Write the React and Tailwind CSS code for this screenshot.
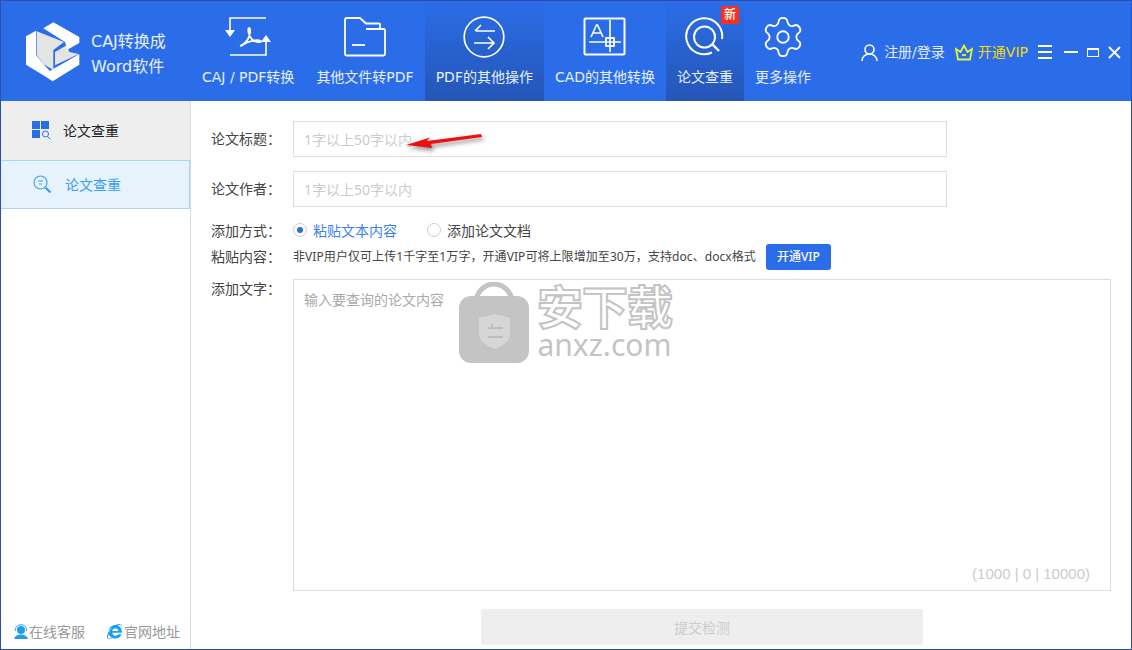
import { Settings } from "lucide-react";
import { FaInternetExplorer } from "react-icons/fa";

const navItems = [
  { label: "CAJ / PDF转换", icon: <ConvertIcon /> },
  { label: "其他文件转PDF", icon: <FolderIcon /> },
  { label: "PDF的其他操作", icon: <SwapIcon />, active: true },
  { label: "CAD的其他转换", icon: <CadIcon /> },
  { label: "论文查重", icon: <CheckIcon />, active: true, badge: true },
  { label: "更多操作", icon: <Settings size={46} color="white" strokeWidth={0.95} /> },
];

function ConvertIcon() {
  return (
    <svg width="48" height="40" viewBox="0 0 48 40" fill="none" stroke="white" strokeWidth="1.6">
      <path d="M42 1H6v13" />
      <path d="M1 13h10l-5 7z" fill="white" stroke="none" />
      <path d="M6 38h36V24" />
      <path d="M37 25h10l-5-7z" fill="white" stroke="none" />
      <path d="M16 29c5-2 9-7 10-13 .4-3-.1-5-1-5s-1 3 0 6c1 4 4 7 9 8 2 .4 3 0 3-.6 0-1-3-1.400-6-1-5 .6-10 2.600-14 5.600" strokeWidth="1.800" />
    </svg>
  );
}

function FolderIcon() {
  return (
    <svg width="42" height="40" viewBox="0 0 42 40" fill="none" stroke="white" strokeWidth="1.8">
      <path d="M1 3q0-2 2-2h13l6 5.500h13q1 0 1 1V12" />
      <path d="M1 3v34q0 1.500 1.500 1.500h37q1.500 0 1.500-1.500V13.500q0-1.500-1.500-1.500H22" />
      <path d="M8 28h13" />
    </svg>
  );
}

function SwapIcon() {
  return (
    <svg width="42" height="42" viewBox="0 0 42 42" fill="none" stroke="white" strokeWidth="1.700">
      <circle cx="21" cy="21" r="19.800" />
      <path d="M32 15H13M18 9l-6 6" />
      <path d="M11 27h20M25 21l6 6-6 6" />
    </svg>
  );
}

function CadIcon() {
  return (
    <svg width="44" height="40" viewBox="0 0 44 40" fill="none" stroke="white" strokeWidth="1.600">
      <rect x="1.500" y="1.500" width="40" height="36" rx="1" strokeWidth="2" />
      <rect x="23" y="21" width="8" height="8" strokeWidth="1.800" />
      <path d="M27 3v32M6 25h32" />
      <path d="M8 20 13.500 8h1L20 20M10 16h8" />
    </svg>
  );
}

function CheckIcon() {
  return (
    <svg width="40" height="40" viewBox="0 0 40 40" fill="none" stroke="white" strokeWidth="2">
      <path d="M27 35.500A18 18 0 1 1 37 22" />
      <circle cx="19.500" cy="20" r="10.500" />
      <path d="M27 27l7 7" strokeWidth="2.400" />
    </svg>
  );
}

function Logo() {
  return (
    <svg width="68" height="68" viewBox="0 0 204 204" className="shrink-0">
      <path d="M50 40 132 72 100 96v60l-30-18-20-28z" fill="#e4e4e4" />
      <path d="M105 102 140 82l8 20 28 6-71 34z" fill="#e4e4e4" />
      <path d="M18 55 48 38v72l22 28 28 30-28 4-52-32z" fill="white" />
      <path d="M70 31 100 13l78 44v18l-36 20-7-23z" fill="white" />
      <path d="M178 108v32l-80 50-28-18 28-18 32-18z" fill="white" />
    </svg>
  );
}

export default function App() {
  return (
    <div className="w-[1132px] h-[650px] flex flex-col overflow-hidden bg-white border border-[#2850ac] font-['Noto_Sans','Noto_Sans_CJK_SC',sans-serif] text-[14px] text-[#333]">
      <header className="h-[100px] shrink-0 flex bg-[#2b6de8] text-white font-['DejaVu_Sans','Noto_Sans_CJK_SC',sans-serif]">
        <div className="w-[190px] shrink-0 flex items-center pl-[19px] gap-[3px]">
          <div className="mt-[2px]">
            <Logo />
          </div>
          <div className="pt-[6px] text-[16px] leading-[25px] text-[#e8f0ff]">
            <div>CAJ转换成</div>
            <div>Word软件</div>
          </div>
        </div>

        {navItems.map((item) => (
          <div
            key={item.label}
            className={
              item.active
                ? "relative flex flex-col items-center px-[11px] pt-[14px] bg-gradient-to-b from-[#2b6de8] to-[#2456b6]"
                : "relative flex flex-col items-center px-[11px] pt-[14px]"
            }
          >
            <div className="h-[44px] flex items-center">{item.icon}</div>
            <div className="mt-[8px] whitespace-nowrap leading-[20px] text-[#e8f0ff]">{item.label}</div>
            {item.badge && (
              <span className="absolute top-[5px] right-[5px] w-[18px] h-[18px] rounded-[2px] bg-[#f5321e] text-[12px] leading-[18px] text-center font-medium">
                新
              </span>
            )}
          </div>
        ))}

        <div className="ml-auto flex items-center pr-[10px] pt-[2px]">
          <svg width="17" height="17" viewBox="0 0 17 17" fill="none" stroke="white" strokeWidth="1.600">
            <circle cx="8.500" cy="5.500" r="4.500" />
            <path d="M1 17c0-4 3-7 7.500-7S16 13 16 17" />
          </svg>
          <span className="ml-[6px] text-[#e8f0ff]">注册/登录</span>
          <svg className="ml-[10px]" width="18" height="17" viewBox="0 0 18 17" fill="none" stroke="#e3f23c" strokeWidth="1.800">
            <path d="M3 15.500 1 5l4.500 3L9 1.500 12.500 8 17 5l-2 10.500z" />
            <path d="M7 11h4" />
          </svg>
          <span className="ml-[5px] text-[#f5d90a]">开通VIP</span>
          <div className="ml-[10px] w-[14px] flex flex-col gap-[4px]">
            <div className="h-[2px] bg-white" />
            <div className="h-[2px] bg-white" />
            <div className="h-[2px] bg-white" />
          </div>
          <div className="ml-[12px] w-[14px] h-[2px] bg-white" />
          <div className="ml-[9px] w-[12px] h-[9px] border border-white border-t-2" />
          <svg className="ml-[9px]" width="13" height="13" viewBox="0 0 13 13" stroke="white" strokeWidth="1.800">
            <path d="M1 1l11 11M12 1 1 12" />
          </svg>
        </div>
      </header>

      <div className="flex-1 flex min-h-0 relative">
        <aside className="w-[190px] shrink-0 flex flex-col border-r border-[#ddd]">
          <div className="h-[59px] flex items-center pl-[31px] gap-[12px] bg-[#eeeeee] text-[#222]">
            <svg width="19" height="19" viewBox="0 0 19 19" className="shrink-0">
              <rect width="8" height="8" fill="#2b6de8" />
              <rect x="9" width="8" height="8" fill="#2b6de8" />
              <rect y="9" width="8" height="8" fill="#2b6de8" />
              <circle cx="13.500" cy="13" r="3" fill="none" stroke="#2b6de8" />
              <path d="M15.500 15.500l2.500 2.500" stroke="#2b6de8" />
            </svg>
            论文查重
          </div>
          <div className="h-[49px] flex items-center pl-[32px] gap-[13px] bg-[#e6f3fc] border-y border-r border-[#a6d8f0] text-[#3b9df5]">
            <svg width="19" height="19" viewBox="0 0 19 19" fill="none" stroke="#3b9df5" strokeWidth="1.100">
              <circle cx="7.500" cy="7.500" r="6.500" />
              <path d="M5 6h5M6 9h3" />
              <path d="M12.500 12.500l5 5" strokeWidth="2.200" />
            </svg>
            论文查重
          </div>
          <div className="mt-auto mb-[7px] flex items-center pl-[12px] text-[#999]">
            <svg width="16" height="16" viewBox="0 0 16 16" className="shrink-0">
              <circle cx="8" cy="6" r="4" fill="#1c9ff0" />
              <path d="M2.500 7C2 3 4.500 .8 8 .8s6 2.200 5.500 6.200" fill="none" stroke="#1c9ff0" />
              <path d="M1 15c1-3 3-4.500 7-4.500s6 1.500 7 4.500z" fill="#1c9ff0" />
            </svg>
            <span>在线客服</span>
            <FaInternetExplorer className="ml-[22px] shrink-0" size={15} color="#1c9ff0" />
            <span className="ml-[2px]">官网地址</span>
          </div>
        </aside>

        <main className="flex-1 min-w-0 pl-[20px] pt-[20px] text-[#444]">
          <div className="flex items-center h-[36px]">
            <label className="w-[82px] shrink-0 pb-[1px]">论文标题：</label>
            <div className="w-[654px] h-[36px] border border-[#ddd] pl-[10px] leading-[35px] text-[#ccc]">1字以上50字以内</div>
          </div>
          <div className="flex items-center h-[36px] mt-[14px]">
            <label className="w-[82px] shrink-0 pb-[1px]">论文作者：</label>
            <div className="w-[654px] h-[36px] border border-[#ddd] pl-[10px] leading-[35px] text-[#ccc]">1字以上50字以内</div>
          </div>
          <div className="flex items-center mt-[13px] h-[20px]">
            <label className="w-[82px] shrink-0">添加方式：</label>
            <span className="w-[14px] h-[14px] rounded-full border border-[#ccc] flex items-center justify-center">
              <span className="w-[6px] h-[6px] rounded-full bg-[#2b6de8]" />
            </span>
            <span className="ml-[6px] text-[#3b82f0]">粘贴文本内容</span>
            <span className="ml-[30px] w-[14px] h-[14px] rounded-full border border-[#ccc]" />
            <span className="ml-[6px]">添加论文文档</span>
          </div>
          <div className="flex items-center mt-[4px] h-[26px]">
            <label className="w-[82px] shrink-0 pb-[2px]">粘贴内容：</label>
            <span className="text-[12px] tracking-[0.07px] whitespace-nowrap">非VIP用户仅可上传1千字至1万字，开通VIP可将上限增加至30万，支持doc、docx格式</span>
            <span className="ml-[10px] w-[65px] h-[26px] rounded-[3px] bg-[#2b6de8] text-white text-[12px] font-medium leading-[26px] text-center">开通VIP</span>
          </div>
          <div className="flex mt-[9px]">
            <label className="w-[82px] shrink-0 leading-[20px]">添加文字：</label>
            <div className="w-[818px] h-[312px] border border-[#ddd] pl-[10px] pt-[10px] flex flex-col text-[#aaa]">
              <div className="leading-[20px]">输入要查询的论文内容</div>
              <div className="mt-auto self-end pr-[20px] pb-[5px] text-[#ccc] font-['Liberation_Sans',sans-serif] text-[15px]">(1000 | 0 | 10000)</div>
            </div>
          </div>
          <div className="ml-[270px] mt-[18px] w-[442px] h-[36px] rounded-[3px] bg-[#eeeeee] text-[#ccc] text-center leading-[38px]">提交检测</div>
        </main>

        {/* watermark */}
        <div className="absolute left-[457px] top-[181px] flex items-start pointer-events-none">
          <svg width="72" height="82" viewBox="0 0 72 82">
            <path d="M18 18C20 8 28 2 36 2s16 6 18 16" fill="none" stroke="#c4c4c4" strokeWidth="5" />
            <rect x="1" y="14" width="70" height="67" rx="12" fill="#c4c4c4" />
            <path d="M21 36l16-4 15 4v18q-2 8-15 13-14-5-16-13z" fill="#d6d6d6" />
            <path d="M30 46h15M30 55h15M34 42v3" stroke="#bdbdbd" strokeWidth="2" fill="none" />
          </svg>
          <div className="ml-[7px] -mt-[1px] flex flex-col items-center">
            <div className="text-[46px] leading-[50px] font-bold text-white [-webkit-text-stroke:2px_#c4c4c4] tracking-[-1px]">安下载</div>
            <div className="text-[30px] leading-[28px] text-[#c4c4c4] font-['Noto_Sans',sans-serif]">anxz.com</div>
          </div>
        </div>

        {/* red arrow */}
        <svg className="absolute left-[400px] top-[28px] drop-shadow-[2px_3px_2px_rgba(0,0,0,0.4)]" width="90" height="28" viewBox="0 0 90 28">
          <path d="M5 16 29 8.500 26 12l54-7 1 3-51 7 1 4z" fill="#ee0f0f" />
        </svg>
      </div>
    </div>
  );
}
